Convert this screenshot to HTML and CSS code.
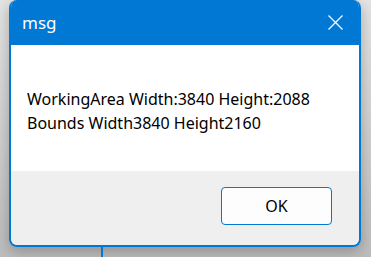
FILE: index.html
```html
<!DOCTYPE html>
<html lang="en">
<head>
  <meta charset="UTF-8" />
  <title>msg</title>
  <link rel="stylesheet" href="styles.css">
</head>
<body>
  <div class="dialog">
    <div class="title-bar">
      <span class="title">msg</span>
      <svg class="close" width="15" height="15" viewBox="0 0 15 15">
        <path d="M0.5 0.5 L14.5 14.5 M14.5 0.5 L0.5 14.5" stroke="#fff" stroke-width="1.3" fill="none" />
      </svg>
    </div>
    <div class="content">
      <p>WorkingArea Width:3840 Height:2088</p>
      <p>Bounds Width3840 Height2160</p>
    </div>
    <div class="footer">
      <button>OK</button>
    </div>
  </div>
  <div class="behind-line"></div>
</body>
</html>
```

FILE: styles.css
```css
body {
  margin: 0;
  height: 257px;
  overflow: hidden;
  background: linear-gradient(#e4e4e4, #bcbcbc);
  font-family: "Noto Sans", "Open Sans", sans-serif;
}

.dialog {
  margin-left: 9px;
  width: 348px;
  height: 245px;
  border: 2px solid #0078d4;
  border-top: none;
  border-radius: 8px;
  overflow: hidden;
  display: flex;
  flex-direction: column;
  box-shadow: 0 4px 14px rgba(0, 0, 0, 0.25);
}

.title-bar {
  height: 45px;
  background: #0078d4;
  display: flex;
  align-items: center;
  justify-content: space-between;
  padding: 0 16px 0 11px;
  flex-shrink: 0;
}

.title {
  color: #fff;
  font-size: 17px;
  margin-top: -1px;
}

.close {
  margin-top: -1px;
}

.content {
  height: 126px;
  background: #fff;
  padding-top: 42px;
  box-sizing: border-box;
  padding-left: 16px;
  color: #000;
  font-size: 16px;
  line-height: 24px;
  flex-shrink: 0;
}

.content p {
  margin: 0;
}

.footer {
  flex: 1;
  background: #efefef;
  display: flex;
  justify-content: flex-end;
  align-items: flex-start;
  padding: 16px 27px 0 0;
}

button {
  width: 111px;
  height: 38px;
  background: #fdfdfd;
  border: 1px solid #0078d4;
  border-radius: 4px;
  font-family: "Noto Sans", "Open Sans", sans-serif;
  font-size: 16px;
  color: #000;
}

.behind-line {
  margin-left: 101px;
  width: 2px;
  height: 12px;
  background: #0078d4;
}
```
